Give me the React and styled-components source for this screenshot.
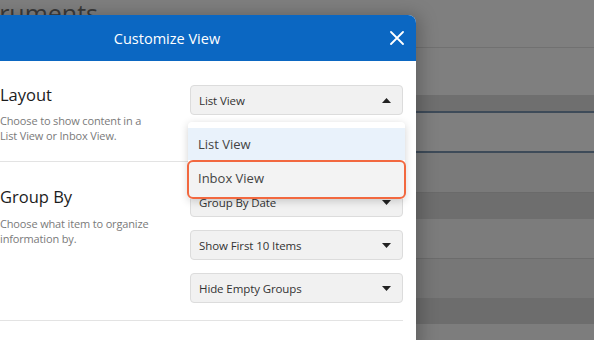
import React from 'react';
import styled, { createGlobalStyle } from 'styled-components';

const GlobalStyle = createGlobalStyle`
  html, body {
    margin: 0;
    padding: 0;
    overflow: hidden;
    background: #7d7d7d;
  }
  body {
    font-family: "Open Sans", "Noto Sans", sans-serif;
  }
`;

const Page = styled.div`
  position: relative;
  width: 594px;
  height: 340px;
  overflow: hidden;
  display: flex;
  flex-direction: column;
`;

const PageTitle = styled.div`
  height: 48px;
  flex: none;
  box-sizing: border-box;
  background: #7f7f7f;
  border-bottom: 1px solid #717171;
  overflow: hidden;
  color: #3a3a3a;
  font-size: 25px;
  line-height: 25px;
  white-space: nowrap;
  margin-left: -44px;
  padding-top: 1px;
`;

const Band = styled.div`
  flex: none;
  height: ${p => p.h}px;
  background: ${p => p.bg};
  border-bottom: ${p => (p.line ? `${p.lineW || 1}px solid ${p.line}` : 'none')};
`;

const Modal = styled.div`
  position: absolute;
  top: 15px;
  left: -82px;
  width: 498px;
  height: 340px;
  background: #fff;
  border-radius: 0 8px 0 0;
  box-shadow: 4px 0 18px rgba(0, 0, 0, 0.25);
  display: flex;
  flex-direction: column;
`;

const Header = styled.div`
  height: 46px;
  flex: none;
  background: #0b67c2;
  border-radius: 0 8px 0 0;
  display: flex;
  align-items: center;
  justify-content: center;
  position: relative;
  color: #fff;
  font-size: 14.5px;
`;

const Close = styled.button`
  position: absolute;
  right: 12px;
  top: 16px;
  width: 14px;
  height: 14px;
  padding: 0;
  border: none;
  background: none;
  display: flex;
`;

const Body = styled.div`
  padding: 0 13px 0 82px;
`;

const Section = styled.div`
  display: grid;
  grid-template-columns: 155px 1fr;
  column-gap: 35px;
  padding: ${p => p.pt}px 0 ${p => p.pb}px;
  border-bottom: 1px solid #e3e3e3;
`;

const Title = styled.div`
  font-size: 16.5px;
  line-height: 20px;
  font-weight: 500;
  color: #1c1c1c;
`;

const Desc = styled.div`
  margin-top: ${p => p.mt}px;
  font-size: 11px;
  letter-spacing: -0.15px;
  line-height: 15px;
  color: #7a7a7a;
`;

const Controls = styled.div`
  display: flex;
  flex-direction: column;
  gap: 13px;
  position: relative;
`;

const Select = styled.div`
  height: 30px;
  box-sizing: border-box;
  background: #f1f1f1;
  border: 1px solid #dcdcdc;
  border-radius: 4px;
  display: flex;
  align-items: center;
  justify-content: space-between;
  padding: 0 11px 0 8px;
  font-size: 11.5px;
  letter-spacing: -0.1px;
  color: #333;
`;

const Menu = styled.div`
  position: absolute;
  top: 37px;
  left: -2px;
  right: -2px;
  background: #fff;
  border-radius: 4px;
  box-shadow: 0 2px 8px rgba(0, 0, 0, 0.18);
  padding-top: 6px;
  z-index: 2;
`;

const Item = styled.div`
  height: ${p => p.h}px;
  display: flex;
  align-items: center;
  padding-left: 10px;
  font-size: 13px;
  color: #444;
  box-sizing: border-box;
  background: ${p => (p.hover ? '#e9f2fb' : '#f3f3f3')};
  border: ${p => (p.focus ? '2px solid #f2683f' : 'none')};
  border-radius: ${p => (p.focus ? '6px' : '0')};
  margin: ${p => (p.focus ? '0 -1px' : '0')};
  ${p => p.focus && 'padding-left: 9px; padding-bottom: 3px;'}
`;

const Caret = ({ up }) => (
  <svg width="9" height="5" viewBox="0 0 9 5">
    <path d={up ? 'M0 5 L4.5 0 L9 5 Z' : 'M0 0 L9 0 L4.5 5 Z'} fill="#222" />
  </svg>
);

export default function App() {
  return (
    <>
      <GlobalStyle />
      <Page>
        <PageTitle>Instruments</PageTitle>
        <Band h={47} bg="#7f7f7f" />
        <Band h={16} bg="#6f6f6f" line="#3e4b59" lineW={2} />
        <Band h={38} bg="#7f7f7f" line="#3e4b59" lineW={2} />
        <Band h={39} bg="#7a7a7a" line="#6a6a6a" />
        <Band h={26} bg="#6e6e6e" />
        <Band h={39} bg="#7c7c7c" line="#6c6c6c" />
        <Band h={39} bg="#777777" />
        <Band h={26} bg="#6d6d6d" />
        <Band h={20} bg="#7d7d7d" />

        <Modal>
          <Header>
            Customize View
            <Close>
              <svg width="14" height="14" viewBox="0 0 14 14">
                <path d="M1 1 L13 13 M13 1 L1 13" stroke="#fff" strokeWidth="1.8" strokeLinecap="round" />
              </svg>
            </Close>
          </Header>
          <Body>
            <Section pt={24} pb={18}>
              <div>
                <Title>Layout</Title>
                <Desc mt={8}>Choose to show content in a List View or Inbox View.</Desc>
              </div>
              <Controls>
                <Select>
                  List View
                  <Caret up />
                </Select>
                <Menu>
                  <Item h={32} hover>List View</Item>
                  <Item h={39} focus>Inbox View</Item>
                </Menu>
              </Controls>
            </Section>
            <Section pt={25} pb={17}>
              <div>
                <Title>Group By</Title>
                <Desc mt={9}>Choose what item to organize information by.</Desc>
              </div>
              <Controls>
                <Select>
                  Group By Date
                  <Caret />
                </Select>
                <Select>
                  Show First 10 Items
                  <Caret />
                </Select>
                <Select>
                  Hide Empty Groups
                  <Caret />
                </Select>
              </Controls>
            </Section>
          </Body>
        </Modal>
      </Page>
    </>
  );
}
